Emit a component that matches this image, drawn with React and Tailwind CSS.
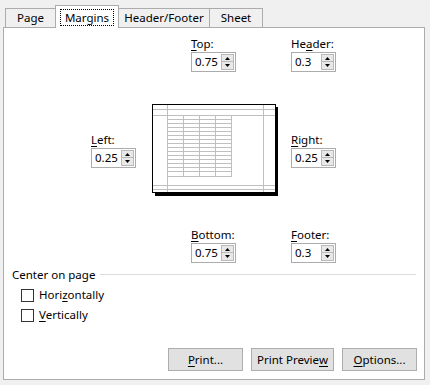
import React from "react";

const Arrow = ({ up }) => (
  <svg width="5" height="3" viewBox="0 0 5 3" className="block">
    <polygon points={up ? "2.5,0 5,3 0,3" : "0,0 5,0 2.5,3"} fill="#000" />
  </svg>
);

const Spin = ({ value }) => (
  <div className="mt-px flex h-[20px] w-[45px] items-center border border-[#acacac] bg-white pl-[3px] pr-px">
    <span className="flex-1 leading-none">{value}</span>
    <div className="flex flex-col">
      <div className="flex h-[8px] w-[13px] items-center justify-center border border-[#b9b9b9] bg-[#e8e8e8]">
        <Arrow up />
      </div>
      <div className="flex h-[8px] w-[13px] items-center justify-center border border-t-0 border-[#b9b9b9] bg-[#e8e8e8]">
        <Arrow />
      </div>
    </div>
  </div>
);

const Field = ({ label, value }) => (
  <div className="flex flex-col">
    <div className="h-[15px] leading-[15px]">{label}</div>
    <Spin value={value} />
  </div>
);

const U = ({ children }) => (
  <span className="underline underline-offset-2">{children}</span>
);

const Preview = () => {
  const rows = [];
  for (let y = 11; y <= 67; y += 4) rows.push(y);
  rows.push(72);
  return (
    <svg width="126" height="92" viewBox="0 0 126 92" className="block shrink-0">
      <rect x="3" y="3" width="123" height="89" fill="#000" />
      <rect x="0.5" y="0.5" width="123" height="88" fill="#fff" stroke="#000" />
      <g stroke="#bfbfbf" strokeWidth="1" shapeRendering="crispEdges">
        <line x1="1" y1="5.5" x2="123" y2="5.5" />
        <line x1="1" y1="11.5" x2="123" y2="11.5" />
        <line x1="1" y1="81.5" x2="123" y2="81.5" />
        <line x1="1" y1="85.5" x2="123" y2="85.5" />
        <line x1="15.5" y1="1" x2="15.5" y2="88" />
        <line x1="111.5" y1="1" x2="111.5" y2="88" />
        {rows.map((y) => (
          <line key={y} x1="15" y1={y + 0.5} x2="80" y2={y + 0.5} />
        ))}
        {[31, 47, 63, 79].map((x) => (
          <line key={x} x1={x + 0.5} y1="11" x2={x + 0.5} y2="72" />
        ))}
      </g>
    </svg>
  );
};

const Check = ({ children }) => (
  <div className="flex h-[20px] items-center pl-[17px]">
    <div className="h-[13px] w-[13px] border border-[#333] bg-white" />
    <span className="ml-[5px]">{children}</span>
  </div>
);

const Button = ({ width, children }) => (
  <div
    className={`flex h-[23px] items-center justify-center border border-[#adadad] bg-[#e1e1e1] ${width}`}
  >
    {children}
  </div>
);

export default function App() {
  return (
    <div className="h-[385px] w-[430px] overflow-hidden bg-[#f0f0f0] font-['Noto_Sans',sans-serif] text-[11.5px] text-black">
      <div className="flex h-[27px] items-end pl-[5px]">
        <div className="flex h-[19px] w-[51px] items-center justify-center border border-b-0 border-[#acacac] bg-[#f0f0f0]">
          Page
        </div>
        <div className="relative z-10 -mb-px -ml-px flex h-[23px] w-[64px] justify-center border border-b-0 border-[#acacac] bg-white pt-[3px]">
          <span className="h-[17px] border border-dotted border-black px-[4px] leading-[15px]">
            Margins
          </span>
        </div>
        <div className="-ml-px flex h-[19px] w-[92px] items-center justify-center border border-b-0 border-[#acacac] bg-[#f0f0f0]">
          Header/Footer
        </div>
        <div className="-ml-px flex h-[19px] w-[54px] items-center justify-center border border-b-0 border-[#acacac] bg-[#f0f0f0]">
          Sheet
        </div>
      </div>

      <div className="ml-[3px] flex h-[353px] w-[422px] flex-col border border-[#acacac] bg-white">
        <div className="flex pl-[187px] pt-[8px]">
          <Field label={<><U>T</U>op:</>} value="0.75" />
          <div className="ml-[55px]">
            <Field label={<>He<U>a</U>der:</>} value="0.3" />
          </div>
        </div>

        <div className="mt-[32px] flex items-center pl-[87px]">
          <Field label={<><U>L</U>eft:</>} value="0.25" />
          <div className="ml-[16px]">
            <Preview />
          </div>
          <div className="ml-[13px]">
            <Field label={<><U>R</U>ight:</>} value="0.25" />
          </div>
        </div>

        <div className="mt-[31px] flex pl-[187px]">
          <Field label={<><U>B</U>ottom:</>} value="0.75" />
          <div className="ml-[55px]">
            <Field label={<><U>F</U>ooter:</>} value="0.3" />
          </div>
        </div>

        <div className="mt-[4px] flex h-[15px] items-center pl-[8px] pr-[8px]">
          <span className="leading-[15px]">Center on page</span>
          <div className="ml-[5px] h-px flex-1 bg-[#dcdcdc]" />
        </div>

        <div className="mt-[3px] flex flex-col">
          <Check>
            Hori<U>z</U>ontally
          </Check>
          <Check>
            <U>V</U>ertically
          </Check>
        </div>

        <div className="mt-[23px] flex justify-end gap-[8px] pr-[7px]">
          <Button width="w-[75px]">
            <U>P</U>rint...
          </Button>
          <Button width="w-[83px]">
            Print Previe<U>w</U>
          </Button>
          <Button width="w-[75px]">
            <U>O</U>ptions...
          </Button>
        </div>
      </div>
    </div>
  );
}
